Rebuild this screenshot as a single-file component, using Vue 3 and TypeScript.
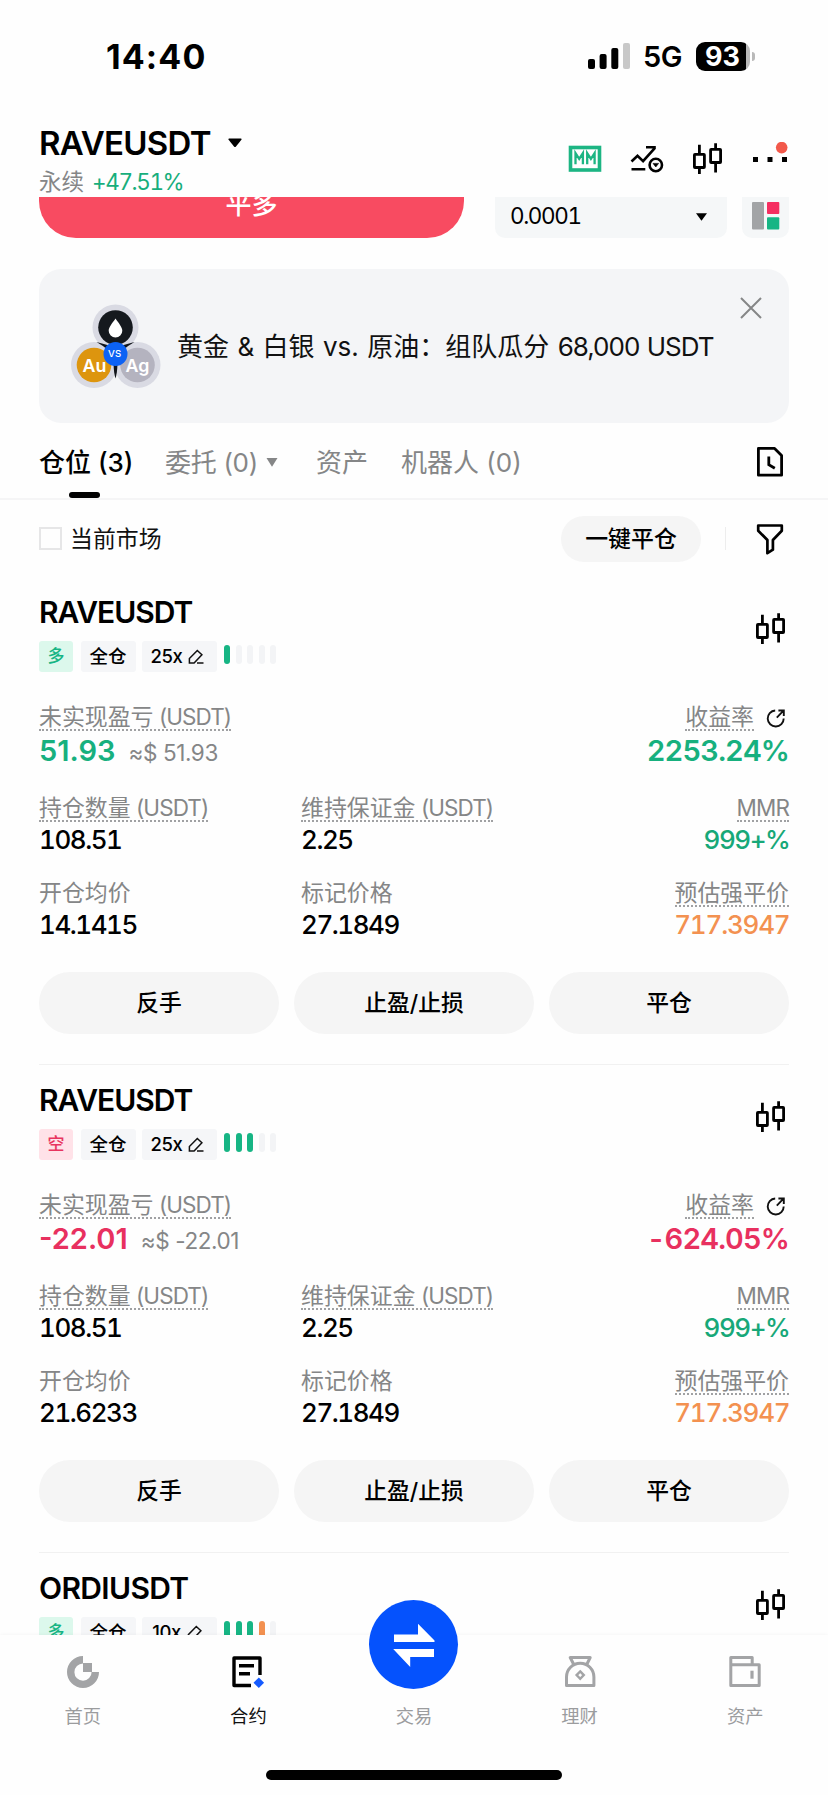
<script setup lang="ts">
interface Cell {
  label: string
  unit?: string
  value: string
  dotted: boolean
  tone?: 'up' | 'warn'
}

interface Position {
  symbol: string
  side: 'long' | 'short'
  leverage: string
  risk: ('on' | 'warn' | 'off')[]
  pnl: string
  approx: string
  rate: string
  rows: Cell[][]
}

const cells = (entry: string): Cell[][] => [
  [
    { label: '持仓数量', unit: ' (USDT)', value: '108.51', dotted: true },
    { label: '维持保证金', unit: ' (USDT)', value: '2.25', dotted: true },
    { label: '', unit: 'MMR', value: '999+%', dotted: true, tone: 'up' },
  ],
  [
    { label: '开仓均价', value: entry, dotted: false },
    { label: '标记价格', value: '27.1849', dotted: false },
    { label: '预估强平价', value: '717.3947', dotted: true, tone: 'warn' },
  ],
]

const positions: Position[] = [
  {
    symbol: 'RAVEUSDT',
    side: 'long',
    leverage: '25x',
    risk: ['on', 'off', 'off', 'off', 'off'],
    pnl: '51.93',
    approx: '≈$ 51.93',
    rate: '2253.24%',
    rows: cells('14.1415'),
  },
  {
    symbol: 'RAVEUSDT',
    side: 'short',
    leverage: '25x',
    risk: ['on', 'on', 'on', 'off', 'off'],
    pnl: '-22.01',
    approx: '≈$ -22.01',
    rate: '-624.05%',
    rows: cells('21.6233'),
  },
  {
    symbol: 'ORDIUSDT',
    side: 'long',
    leverage: '10x',
    risk: ['on', 'on', 'on', 'warn', 'off'],
    pnl: '',
    approx: '',
    rate: '',
    rows: [],
  },
]

const actions = ['反手', '止盈/止损', '平仓']
</script>

<template>
  <div class="app">
    <div class="status">
      <span class="time">14:40</span>
      <div class="status-right">
        <svg class="signal" width="43" height="28" viewBox="0 0 43 28">
          <rect x="0" y="17" width="7" height="10" rx="2" />
          <rect x="11.6" y="12" width="7" height="15" rx="2" />
          <rect x="23.3" y="6" width="7" height="21" rx="2" />
          <rect x="35" y="1" width="7" height="26" rx="2" fill="#c8c8c8" />
        </svg>
        <span class="net">5G</span>
        <div class="battery"><span>93</span></div>
        <i class="battery-tip"></i>
      </div>
    </div>

    <header class="header">
      <div class="pair">
        <div class="pair-name">
          <span>RAVEUSDT</span>
          <svg width="14" height="10" viewBox="0 0 14 10"><path d="M1 .5h12q1 .3.4 1.2L8 8.5q-1 1-2 0L.6 1.7Q0 .8 1 .5z" /></svg>
        </div>
        <div class="pair-sub"><span class="perp">永续</span><span class="chg">+47.51%</span></div>
      </div>
      <div class="tools">
        <svg width="34" height="34" viewBox="0 0 34 34" fill="none" stroke="#1cb583">
          <rect x="2.5" y="5.5" width="29" height="22.5" stroke-width="3.6" />
          <path d="M7.500 22.200v-11l3.700 5.600 3.700-5.600v11M19.200 22.200v-11l3.700 5.600 3.700-5.600v11" stroke-width="2.300" />
        </svg>
        <svg width="34" height="34" viewBox="0 0 34 34" fill="none" stroke="#000" stroke-width="2.6">
          <path d="M1.500 19.500l6-5.700 5.600 5.400L25 5.800M16 5.300h9.800M1.500 27.200h13.800" />
          <circle cx="25.8" cy="23" r="6.2" />
          <path d="M23 21.400h5.600L25.800 25z" fill="#000" stroke-width=".6" />
        </svg>
        <svg width="32" height="34" viewBox="0 0 32 34" fill="none" stroke="#000" stroke-width="2.8">
          <rect x="2.4" y="12.3" width="10" height="13.2" rx=".6" />
          <rect x="18.6" y="7.3" width="10" height="13.2" rx=".6" />
          <path d="M7.400 2.800v9M7.400 26v6M23.600 1.300v5.400M23.600 21v9.600" />
        </svg>
        <svg width="38" height="34" viewBox="0 0 38 34">
          <path d="M2 15h5v5H2zM16.500 15h5v5h-5zM31 15h5v5h-5z" />
          <circle cx="30.7" cy="5.6" r="5.8" fill="#f2594b" />
        </svg>
      </div>
    </header>

    <main class="content">
      <div class="order-row">
        <div class="close-long"><span>平多</span></div>
        <div class="tick">
          <span>0.0001</span>
          <svg width="11" height="8" viewBox="0 0 11 8"><path d="M0 .3h11L5.500 7.800z" /></svg>
        </div>
        <div class="book">
          <svg width="28" height="28" viewBox="0 0 28 28">
            <rect width="12" height="27.5" rx="1" fill="#a2a4a6" />
            <rect x="15" width="12.3" height="12" rx="1" fill="#f52e60" />
            <rect x="15" y="15.3" width="12.3" height="12.2" rx="1" fill="#17b584" />
          </svg>
        </div>
      </div>

      <div class="banner">
        <svg width="90" height="84" viewBox="0 0 90 84">
          <circle cx="44.5" cy="23.5" r="23" fill="#d9dae3" />
          <circle cx="23" cy="61" r="23" fill="#d9dae3" />
          <circle cx="66.5" cy="61" r="23" fill="#d9dae3" />
          <path d="M25.500 38q19 7 38 0-14 8-17 15-.5 14-2 18.500-1.500-4.500-2-18.500-3-7-17-15z" fill="#11151a" />
          <circle cx="44.5" cy="23.5" r="17.3" fill="#15191e" />
          <path d="M44.500 14.500c3 4.500 6.800 8.500 6.800 12.300a6.800 6.800 0 0 1-13.600 0c0-3.800 3.800-7.800 6.800-12.300z" fill="#fff" />
          <circle cx="23" cy="61" r="17.3" fill="#dd950e" />
          <circle cx="66.5" cy="61" r="17.3" fill="#b4b3bf" />
          <path d="M42.500 60h4q-.5 10-2 14.500-1.500-4.500-2-14.500z" fill="#11151a" />
          <text x="23.5" y="67.5" font-size="17.8" font-weight="600">Au</text>
          <text x="66.5" y="67.5" font-size="17.8" font-weight="600">Ag</text>
          <circle cx="44.5" cy="50" r="12" fill="#0c62f4" />
          <text x="43.8" y="53.3" font-size="9.6" font-weight="500" letter-spacing=".2">VS</text>
        </svg>
        <span class="banner-text">黄金 &amp; 白银 vs. 原油：组队瓜分 <b>68,000 USDT</b></span>
        <svg class="banner-close" width="22" height="22" viewBox="0 0 22 22" fill="none" stroke="#858687" stroke-width="2"><path d="M1 1l20 20M21 1L1 21" /></svg>
      </div>

      <nav class="tabs">
        <div class="tab active">仓位 (3)</div>
        <div class="tab orders">委托 (0)<svg width="12" height="9" viewBox="0 0 12 9" fill="#858687"><path d="M.5 0h11L6 8.800z" /></svg></div>
        <div class="tab assets">资产</div>
        <div class="tab bots">机器人 (0)</div>
        <svg class="history" width="28" height="32" viewBox="0 0 28 32" fill="none" stroke="#000" stroke-width="2.8">
          <path d="M2.400 2.400h16.200l7 7v19.800H2.400z" stroke-linejoin="round" />
          <path d="M12.800 10.500v8.200l6 3.500" />
        </svg>
      </nav>

      <div class="filter-row">
        <i class="checkbox"></i>
        <span class="market">当前市场</span>
        <div class="close-all">一键平仓</div>
        <i class="sep"></i>
        <svg width="28" height="32" viewBox="0 0 28 32" fill="none" stroke="#000" stroke-width="2.7" stroke-linejoin="round">
          <path d="M2.200 2.500h23.600v5.200L16.900 17v9.700l-5.500 3.500V17L2.200 7.700z" />
        </svg>
      </div>

      <section v-for="(p, i) in positions" :key="i" class="card">
        <div class="card-head">
          <div>
            <div class="symbol" :class="{ wide: p.symbol === 'ORDIUSDT' }">{{ p.symbol }}</div>
            <div class="tags">
              <span class="tag side" :class="p.side">{{ p.side === 'long' ? '多' : '空' }}</span>
              <span class="tag mode">全仓</span>
              <span class="tag lev">{{ p.leverage }}
                <svg width="16" height="16" viewBox="0 0 16 16" fill="none" stroke="#111" stroke-width="1.5">
                  <path d="M1.400 14V9.600L9.300 1.500l4.600 4.300-7.800 8.200zM9 14h6.500" />
                </svg>
              </span>
              <span class="risk"><i v-for="(r, k) in p.risk" :key="k" :class="r"></i></span>
            </div>
          </div>
          <svg class="candles" width="32" height="34" viewBox="0 0 32 34" fill="none" stroke="#000" stroke-width="2.8">
            <rect x="2.4" y="12.3" width="10" height="13.2" rx=".6" />
            <rect x="18.6" y="7.3" width="10" height="13.2" rx=".6" />
            <path d="M7.400 2.800v9M7.400 26v6M23.600 1.300v5.400M23.600 21v9.600" />
          </svg>
        </div>
        <template v-if="p.rows.length">
          <div class="pnl-row">
            <div>
              <div class="label dotted">未实现盈亏<span class="unit"> (USDT)</span></div>
              <div class="pnl" :class="p.side"><strong>{{ p.pnl }}</strong><span>{{ p.approx }}</span></div>
            </div>
            <div class="right">
              <div class="rate-label">
                <div class="label dotted">收益率</div>
                <svg width="20" height="20" viewBox="0 0 20 20" fill="none" stroke="#111" stroke-width="1.9">
                  <path d="M9.200 2.500A8 8 0 1 0 17.700 10.500M10.800 9.600L17 3.200M12.400 2.500h5.400v5.600" />
                </svg>
              </div>
              <div class="rate" :class="p.side">{{ p.rate }}</div>
            </div>
          </div>
          <div v-for="(row, r) in p.rows" :key="r" class="grid">
            <div v-for="(c, k) in row" :key="k" class="cell">
              <div class="label" :class="{ dotted: c.dotted }">{{ c.label }}<span v-if="c.unit" class="unit">{{ c.unit }}</span></div>
              <div class="value" :class="c.tone">{{ c.value }}</div>
            </div>
          </div>
          <div class="actions">
            <div v-for="a in actions" :key="a" class="action">{{ a }}</div>
          </div>
        </template>
      </section>
    </main>

    <footer class="nav">
      <div class="nav-items">
        <div class="nav-item">
          <svg width="34" height="34" viewBox="0 0 34 34" fill="#a3a4a6">
            <path d="M17 1v7.500a8.600 8.600 0 1 0 8.600 8.500H33A16 16 0 1 1 17 1z" />
            <rect x="17" y="8" width="9" height="9" />
          </svg>
          <span>首页</span>
        </div>
        <div class="nav-item current">
          <svg width="34" height="34" viewBox="0 0 34 34" fill="none" stroke="#000" stroke-width="3.4">
            <path d="M20 30.500H3V3h26v17" stroke-linejoin="round" />
            <path d="M8 10.700h15M8 18.800h11" />
            <path d="M27.800 22.500l5.300 5.300-5.300 5.300-5.300-5.300z" fill="#155bff" stroke="none" />
          </svg>
          <span>合约</span>
        </div>
        <div class="nav-item trade">
          <div class="trade-btn">
            <svg width="44" height="44" viewBox="0 0 44 44" fill="#fff">
              <path d="M2 11.500h24V.800L42.500 17.500V19H2zM42 26H1.200l17 18V34H42z" />
            </svg>
          </div>
          <span>交易</span>
        </div>
        <div class="nav-item">
          <svg width="34" height="34" viewBox="0 0 34 34" fill="none" stroke="#a3a4a6" stroke-width="3">
            <path d="M10.500 9L7.200 2.500h20L24 9M3.500 30.500V22a13.700 13.700 0 0 1 27.400 0v8.500z" stroke-linejoin="round" />
            <path d="M17.200 16.400l3.600 3.700-3.600 3.700-3.600-3.700z" stroke-width="2.4" />
          </svg>
          <span>理财</span>
        </div>
        <div class="nav-item">
          <svg width="34" height="34" viewBox="0 0 34 34" fill="none" stroke="#a3a4a6" stroke-width="3">
            <path d="M2.800 10V2.500h21.400V9.500M2.800 9.700h28.400v20.800H2.800z" stroke-linejoin="round" />
            <path d="M24 15.700v8" stroke-width="3.2" />
          </svg>
          <span>资产</span>
        </div>
      </div>
      <div class="home-bar"></div>
    </footer>
  </div>
</template>

<style>
body {
  margin: 0;
  background: #fff;
}
</style>

<style scoped>
.app {
  width: 828px;
  height: 1795px;
  overflow: hidden;
  display: flex;
  flex-direction: column;
  background: #fefefe;
  color: #000;
  font-family: Inter, "Noto Sans CJK SC", sans-serif;
  white-space: nowrap;
}
svg { display: block; flex: none; }
i { display: block; flex: none; }

.status {
  flex: none;
  height: 112px;
  box-sizing: border-box;
  padding: 0 73px 0 106px;
  display: flex;
  justify-content: space-between;
}
.time { font-size: 34px; font-weight: 700; line-height: 113px; letter-spacing: 1.1px; }
.status-right { display: flex; height: 112px; align-items: center; }
.net { font-size: 29px; font-weight: 600; line-height: 115px; letter-spacing: -.5px; width: 53px; margin-left: 12px; }
.battery {
  width: 54px;
  height: 29px;
  border-radius: 9px;
  background: linear-gradient(90deg, #000 50px, #b9b9b9 50px);
  color: #fff;
  font-size: 27px;
  font-weight: 700;
  line-height: 29px;
  text-align: center;
}
.battery span { margin-right: 1px; }
.battery-tip { width: 3px; height: 9px; margin-left: 2px; border-radius: 0 4px 4px 0; background: #b9b9b9; }

.header {
  flex: none;
  height: 85px;
  box-sizing: border-box;
  padding: 0 39px;
  display: flex;
  justify-content: space-between;
}
.pair { padding-top: 11px; }
.pair-name { display: flex; align-items: center; font-size: 33px; font-weight: 600; line-height: 40px; letter-spacing: -.7px; }
.pair-name span { width: 189px; }
.pair-sub { display: flex; margin-top: 1px; font-size: 22.5px; line-height: 36px; }
.perp { color: #858687; width: 53px; }
.chg {
  color: #17ae7c;
  letter-spacing: -1.4px;
  font-variant-numeric: tabular-nums;
  font-kerning: none;
}
.tools { display: flex; padding-top: 30px; height: 34px; }
.tools svg:nth-child(2) { margin-left: 28px; }
.tools svg:nth-child(3) { margin-left: 28px; }
.tools svg:nth-child(4) { margin-left: 27px; margin-right: 0; }

.content { flex: none; height: 1438px; overflow: hidden; }

.order-row { display: flex; height: 41px; padding: 0 39px; }
.close-long {
  width: 425px;
  height: 41px;
  border-radius: 0 0 37px 37px;
  background: #f84b61;
  overflow: hidden;
}
.close-long span {
  display: block;
  margin-top: -11px;
  color: #fff;
  font-size: 26px;
  font-weight: 500;
  line-height: 38px;
  text-align: center;
}
.tick {
  width: 232px;
  box-sizing: border-box;
  margin-left: 31px;
  padding: 0 20px 4px 15px;
  border-radius: 0 0 10px 10px;
  background: #f5f7f8;
  display: flex;
  align-items: center;
  justify-content: space-between;
  font-size: 22.5px;
  letter-spacing: -1.4px;
  font-variant-numeric: tabular-nums;
}
.tick svg { margin-top: 3px; }
.book { width: 47px; margin-left: 15px; border-radius: 0 0 10px 10px; background: #f5f7f8; }
.book svg { margin: 5px auto 0 10px; }

.banner {
  margin: 31px 39px 0;
  height: 154px;
  box-sizing: border-box;
  padding: 35px 27px 0 32px;
  border-radius: 22px;
  background: #f4f5f7;
  display: flex;
}
.banner text { fill: #fff; text-anchor: middle; font-family: Inter, sans-serif; }
.banner-text { margin-left: 16px; font-size: 26px; line-height: 86px; color: #111; word-spacing: 1.1px; }
.banner-text b { font-weight: 400; letter-spacing: -1px; }
.banner-close { margin: -7px 0 0 auto; }

.tabs {
  height: 77px;
  box-sizing: border-box;
  padding: 0 44px 0 39px;
  border-bottom: 2px solid #f5f5f6;
  display: flex;
  font-size: 26px;
  line-height: 80px;
  color: #858687;
}
.tab { display: flex; align-items: center; height: 79px; }
.tab.active { position: relative; color: #000; font-weight: 500; width: 126px; }
.tab.active::after {
  content: "";
  position: absolute;
  left: 30px;
  bottom: 4px;
  width: 31px;
  height: 6px;
  border-radius: 3px;
  background: #000;
}
.orders { width: 151px; letter-spacing: -.3px; }
.orders svg { margin-left: 8px; }
.assets { width: 85px; }
.history { margin: 23px 0 0 auto; }

.filter-row { height: 77px; padding: 0 44px 0 39px; display: flex; align-items: center; font-size: 22.9px; }
.checkbox { width: 19px; height: 19px; border: 2px solid #e6e6e7; }
.market { margin-left: 8px; color: #111; line-height: 44px; padding-top: 1px; }
.close-all {
  width: 140px;
  height: 46px;
  margin-left: auto;
  border-radius: 23px;
  background: #f5f5f5;
  line-height: 47px;
  font-weight: 500;
  text-align: center;
}
.sep { width: 1px; height: 23px; margin: 0 30px 0 24px; background: #ededed; }

.card { margin: 0 39px; height: 487px; border-bottom: 1px solid #f1f1f1; }
.card-head { display: flex; justify-content: space-between; padding-top: 15px; }
.symbol { font-size: 30px; font-weight: 600; line-height: 40px; letter-spacing: -1px; }
.symbol.wide { letter-spacing: -.65px; }
.candles { margin: 20px 2px 0 0; }
.tags { display: flex; height: 31px; margin-top: 9px; font-size: 18.5px; line-height: 31px; font-weight: 500; }
.tag { background: #f5f6f8; border-radius: 3px; text-align: center; }
.side { width: 34px; font-size: 17px; }
.side.long { background: #dcf8ec; color: #17b584; }
.side.short { background: #ffe2e8; color: #e8345f; }
.mode { width: 54px; padding-right: 1px; margin-left: 8px; }
.lev { width: 71px; padding-right: 4px; margin-left: 6px; display: flex; align-items: center; justify-content: center; gap: 6px; letter-spacing: -.4px; }
.risk { display: flex; gap: 5.6px; margin: 4px 0 0 7px; }
.risk i { width: 6px; height: 19px; border-radius: 3px; background: #f3f4f6; }
.risk i.on { background: #17b584; }
.risk i.warn { background: #f39150; }

.label {
  width: fit-content;
  height: 26px;
  padding-bottom: 2px;
  color: #858687;
  font-size: 22.9px;
  line-height: 28px;
}
.unit { font-size: 22.5px; letter-spacing: -.9px; white-space: pre; }
.label.dotted { padding-bottom: 0; border-bottom: 2px dotted #a0a1a3; }
.pnl-row { display: flex; justify-content: space-between; margin-top: 31px; height: 91px; }
.pnl { display: flex; margin-top: 2px; line-height: 36px; align-items: baseline; }
.pnl strong, .rate { font-size: 29px; font-weight: 600; line-height: 36px; }
.pnl span { margin-left: 13px; font-size: 22.5px; letter-spacing: -.4px; color: #858687; }
.long strong, .rate.long { color: #17b07e; }
.short strong, .rate.short { color: #e8305f; }
.rate-label { display: flex; justify-content: flex-end; }
.rate-label svg { margin: 5px 3px 0 12px; }
.rate { margin-top: 2px; text-align: right; letter-spacing: -.9px; font-variant-numeric: tabular-nums; }
.grid { display: grid; grid-template-columns: 262px 262px 1fr; height: 62px; }
.grid + .grid { margin-top: 23px; }
.cell:last-child { display: flex; flex-direction: column; align-items: flex-end; }
.value {
  margin-top: 2px;
  font-size: 26px;
  font-weight: 500;
  line-height: 32px;
  letter-spacing: -1.45px;
  font-variant-numeric: tabular-nums;
  font-kerning: none;
}
.value.up { color: #17a878; }
.value.warn { color: #f39150; letter-spacing: -1.2px; }
.cell:last-child .value { margin-right: -.5px; }
.actions { display: flex; justify-content: space-between; margin-top: 31px; }
.action {
  width: 240px;
  height: 62px;
  border-radius: 31px;
  background: #f5f5f5;
  font-size: 22.8px;
  font-weight: 500;
  line-height: 62px;
  text-align: center;
}

.nav {
  position: relative;
  flex: none;
  height: 160px;
  background: #fefefe;
  box-shadow: 0 -1px 3px rgba(0, 0, 0, .03);
}
.nav-items { display: grid; grid-template-columns: repeat(5, 1fr); padding-top: 20px; }
.nav-item { display: flex; flex-direction: column; align-items: center; color: #9b9c9e; font-size: 18.3px; line-height: 28px; }
.nav-item span { margin-top: 13px; }
.nav-item.current { color: #111; }
.trade-btn {
  width: 89px;
  height: 89px;
  margin: -55px 0 0;
  border-radius: 50%;
  background: #0552fd;
  display: flex;
  align-items: center;
  justify-content: center;
}
.home-bar { width: 296px; height: 10px; margin: 40px auto 0; border-radius: 5px; background: #000; }
</style>
